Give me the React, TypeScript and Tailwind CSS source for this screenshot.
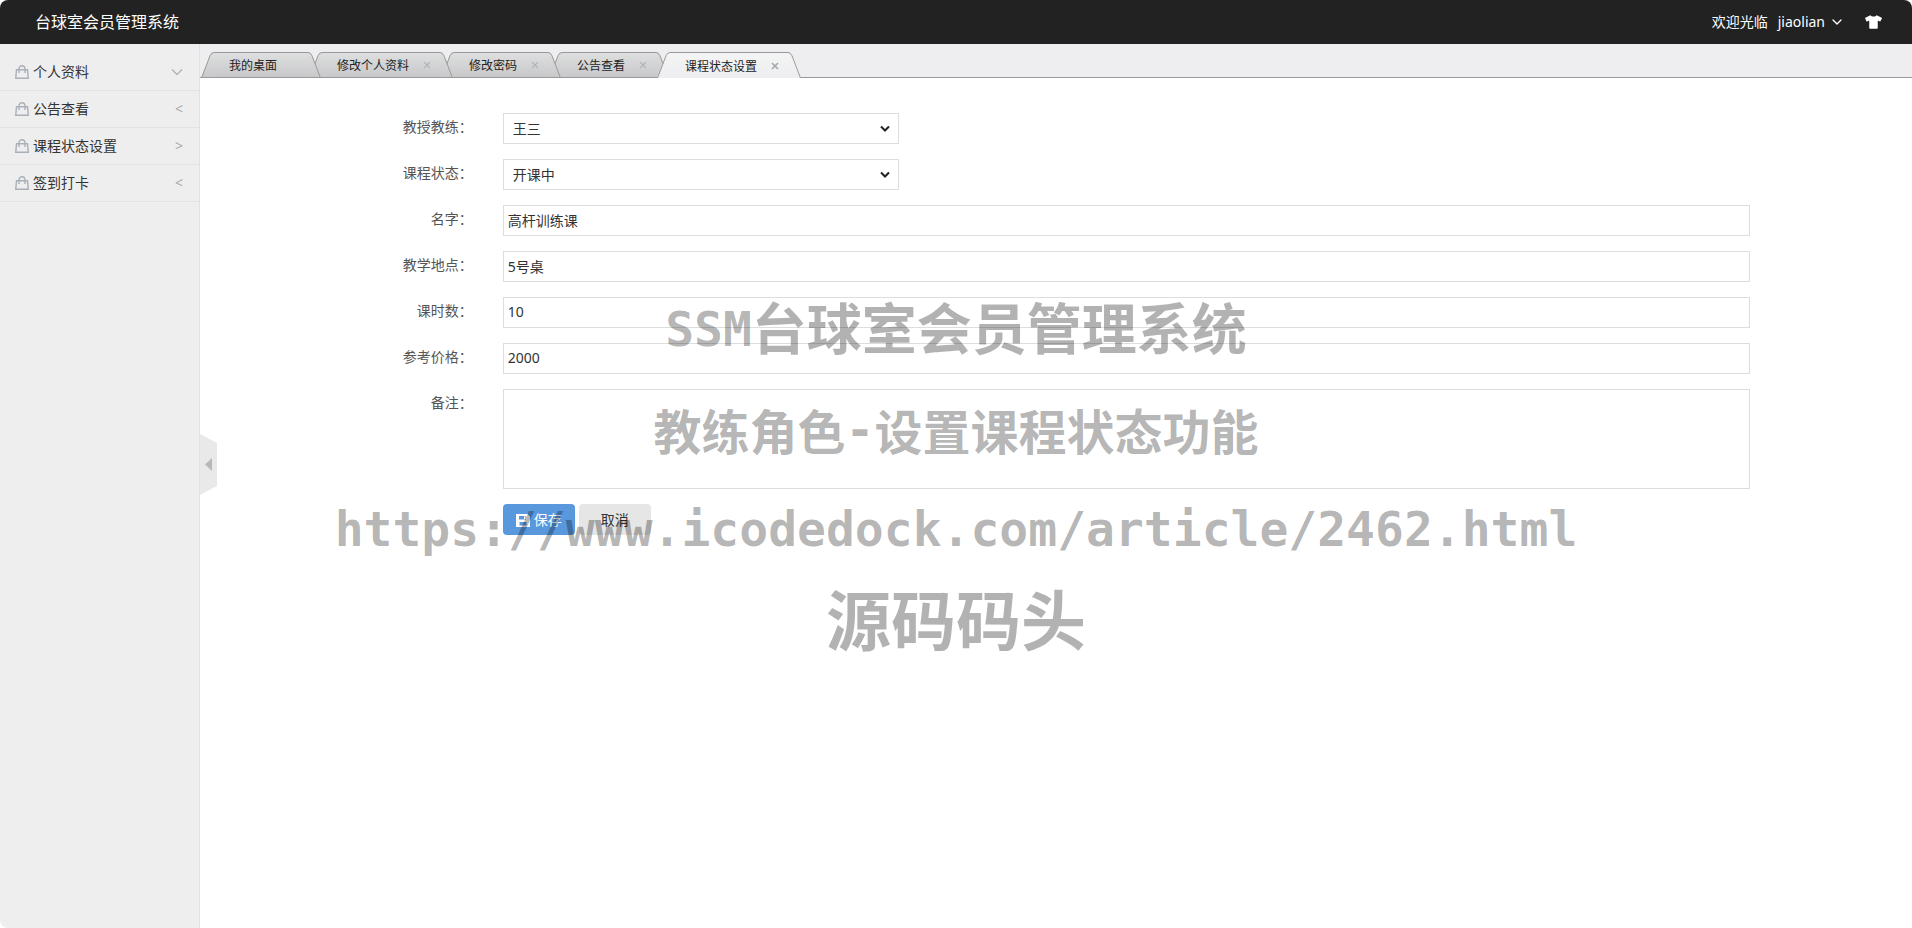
import React, { useState } from "react";
import { ChevronDown } from "lucide-react";
import { FaTshirt } from "react-icons/fa";

const font = "font-['Noto_Sans','Noto_Sans_CJK_SC',sans-serif]";

function BagIcon() {
  return (
    <svg viewBox="0 0 14 14" className="h-[14px] w-[14px] shrink-0" fill="none" stroke="#a9b0b8" aria-hidden="true">
      <path d="M1.500 4.750H12.500L13.250 13.250H0.750Z" strokeWidth="1.4" />
      <path d="M4 8V4.200C4 2 5.200 0.800 7 0.800S10 2 10 4.200V8" strokeWidth="1.4" />
    </svg>
  );
}

function SaveIcon() {
  return (
    <svg viewBox="0 0 14 14" className="h-[14px] w-[14px] shrink-0" aria-hidden="true">
      <path fill="#fff" fillRule="evenodd" d="M0 1h11.500L14 3.500V14H0zM3 3v3.500h7V3zM8 3.500h1.500v2.500H8zM3.500 9h7v3.500h-7z" />
    </svg>
  );
}

const menu = [
  { label: "个人资料", mark: "down" },
  { label: "公告查看", mark: "<" },
  { label: "课程状态设置", mark: ">" },
  { label: "签到打卡", mark: "<" },
];

function Sidebar() {
  return (
    <aside className="w-[200px] shrink-0 border-r border-[#e2e2e2] bg-[#eee] pt-[10px]">
      <nav aria-label="主菜单">
        {menu.map((m) => (
          <button
            key={m.label}
            type="button"
            className="flex h-[37px] w-full items-center border-b border-[#e2e2e2] pr-4 pl-[15px] text-left text-sm text-[#333]"
          >
            <BagIcon />
            <span className="ml-1 flex-1">{m.label}</span>
            {m.mark === "down" ? (
              <svg viewBox="0 0 12 8" className="h-2 w-3" fill="none" stroke="#b4b4b4" strokeWidth="1.4" aria-hidden="true">
                <path d="M1 1.500 6 6.500 11 1.500" />
              </svg>
            ) : (
              <span className="text-[#aaa]">{m.mark}</span>
            )}
          </button>
        ))}
      </nav>
    </aside>
  );
}

const tabs = [
  { label: "我的桌面", closable: false, layer: "z-[4]" },
  { label: "修改个人资料", closable: true, layer: "z-[3]" },
  { label: "修改密码", closable: true, layer: "z-[2]" },
  { label: "公告查看", closable: true, layer: "z-[1]" },
  { label: "课程状态设置", closable: true, layer: "z-[5]" },
];

function TabCap({ active, flip }: { active: boolean; flip?: boolean }) {
  const id = (active ? "on" : "off") + (flip ? "R" : "L");
  return (
    <svg viewBox="0 0 14 26" className={flip ? "h-[26px] w-[14px] shrink-0 -scale-x-100" : "h-[26px] w-[14px] shrink-0"} aria-hidden="true">
      <defs>
        <linearGradient id={id} x1="0" y1="0" x2="0" y2="1">
          <stop offset="0" stopColor={active ? "#f3f4f4" : "#dedfdf"} />
          <stop offset="1" stopColor={active ? "#eeeef0" : "#c8c8ca"} />
        </linearGradient>
      </defs>
      <path d="M0 26 9 3.500Q10.200 0 13 0H14V26z" fill={`url(#${id})`} />
      <path d="M0.500 26 9 3.800Q10.300 0.500 13 0.500H14" fill="none" stroke="#999" />
      {!active && <path d="M0 25.500H14" stroke="#999" />}
    </svg>
  );
}

function TabBar() {
  return (
    <div className="flex h-[34px] items-end border-b border-[#999] bg-[#eeeef0]">
      <div className="-mb-px ml-px flex" role="tablist">
        {tabs.map((t, i) => {
          const active = i === tabs.length - 1;
          return (
            <div key={t.label} className={`relative -mr-3 flex ${t.layer}`}>
              <TabCap active={active} />
              <div
                className={
                  active
                    ? "flex h-[26px] items-center border-t border-[#999] bg-linear-to-b from-[#f3f4f4] to-[#eeeef0] text-xs text-[#222]"
                    : "flex h-[26px] items-center border-y border-[#999] bg-linear-to-b from-[#dedfdf] to-[#c8c8ca] text-xs text-[#222]"
                }
              >
                <button type="button" role="tab" aria-selected={active} className="pt-0.5 pl-[14px]">
                  {t.label}
                </button>
                <span className="flex w-[30px] justify-end pr-1">
                  {t.closable && (
                    <button type="button" aria-label={`关闭${t.label}`} className="p-1">
                      <svg
                        viewBox="0 0 8 8"
                        className="h-2 w-2"
                        fill="none"
                        stroke={active ? "#a3a8ac" : "#b0b5ba"}
                        strokeWidth={active ? 1.6 : 1.2}
                      >
                        <path d="M1 1 7 7M7 1 1 7" />
                      </svg>
                    </button>
                  )}
                </span>
              </div>
              <TabCap active={active} flip />
            </div>
          );
        })}
      </div>
    </div>
  );
}

function Row({ id, label, narrow, children }: { id: string; label: string; narrow?: boolean; children: React.ReactNode }) {
  return (
    <div className="mt-[15px] -mr-[15px] -ml-4 flex">
      <label htmlFor={id} className="w-1/6 px-[15px] pt-[3px] text-right leading-[22px] text-[#555]">
        {label}：
      </label>
      <div className={narrow ? "w-1/4 px-[15px]" : "w-3/4 px-[15px]"}>{children}</div>
    </div>
  );
}

function Select({ id, options }: { id: string; options: string[] }) {
  return (
    <div className="relative">
      <select id={id} className="block h-[31px] w-full appearance-none border border-[#ddd] bg-white px-[9px] text-sm text-[#333] outline-none">
        {options.map((o) => (
          <option key={o}>{o}</option>
        ))}
      </select>
      <svg
        viewBox="0 0 10 8"
        className="pointer-events-none absolute top-3 right-[9px] h-2 w-[10px]"
        fill="none"
        stroke="#222"
        strokeWidth="2"
        aria-hidden="true"
      >
        <path d="M1 1.500 5 5.500 9 1.500" />
      </svg>
    </div>
  );
}

const fields = [
  { id: "name", label: "名字", value: "高杆训练课" },
  { id: "place", label: "教学地点", value: "5号桌" },
  { id: "hours", label: "课时数", value: "10" },
  { id: "price", label: "参考价格", value: "2000" },
];

function CourseForm() {
  const [values, setValues] = useState<Record<string, string>>(Object.fromEntries(fields.map((f) => [f.id, f.value])));
  return (
    <form className="px-5 pt-5 text-sm" onSubmit={(e) => e.preventDefault()}>
      <Row id="coach" label="教授教练" narrow>
        <Select id="coach" options={["王三"]} />
      </Row>
      <Row id="status" label="课程状态" narrow>
        <Select id="status" options={["开课中", "已结束"]} />
      </Row>
      {fields.map((f) => (
        <Row key={f.id} id={f.id} label={f.label}>
          <input
            id={f.id}
            type="text"
            value={values[f.id]}
            onChange={(e) => setValues({ ...values, [f.id]: e.target.value })}
            className="block h-[31px] w-full border border-[#ddd] bg-white px-1 pb-0.5 text-sm text-[#333] outline-none"
          />
        </Row>
      ))}
      <Row id="remark" label="备注">
        <textarea id="remark" className="block h-[100px] w-full resize-none border border-[#ddd] bg-white p-1 text-sm text-[#333] outline-none" />
      </Row>
      <div className="mt-[15px] -mr-[15px] -ml-4 flex">
        <div className="w-1/6" />
        <div className="flex gap-1 px-[15px]">
          <button type="submit" className="flex h-[31px] items-center gap-1 rounded bg-[#5a98de] px-[13px] text-white">
            <SaveIcon />
            保存
          </button>
          <button type="button" className="h-[31px] rounded bg-[#e6e6e6] px-[22px] text-[#333]">
            取消
          </button>
        </div>
      </div>
    </form>
  );
}

function Watermark() {
  return (
    <div className="pointer-events-none absolute inset-x-0 top-[285px] z-20 flex flex-col items-center font-['DejaVu_Sans_Mono','Noto_Sans_CJK_SC',monospace] font-bold whitespace-nowrap text-black/30">
      <p className="flex h-20 items-center leading-none">
        <span className="pt-2 text-[48px]">SSM</span>
        <span className="font-['Noto_Sans_CJK_SC',sans-serif] text-[55px]">台球室会员管理系统</span>
      </p>
      <p className="mt-6 flex h-20 items-center font-['Noto_Sans_CJK_SC',sans-serif] text-[48px] leading-none">
        教练角色
        <span className="font-['DejaVu_Sans_Mono',monospace]">-</span>
        设置课程状态功能
      </p>
      <p className="mt-5 flex h-20 items-center text-[48px] leading-none">https://www.icodedock.com/article/2462.html</p>
      <p className="mt-2 flex h-20 items-center font-['Noto_Sans_CJK_SC',sans-serif] text-[65px] leading-none">源码码头</p>
    </div>
  );
}

export default function App() {
  return (
    <div className={`relative flex min-h-screen flex-col overflow-hidden rounded-lg bg-white ${font}`}>
      <header className="flex h-11 items-center justify-between bg-[#222] pr-[30px] pl-[35px] text-white">
        <h1 className="text-base">台球室会员管理系统</h1>
        <div className="flex items-center text-sm">
          <span>欢迎光临</span>
          <button type="button" className="ml-2.5 flex items-center gap-1">
            jiaolian
            <ChevronDown size={16} strokeWidth={2} />
          </button>
          <button type="button" aria-label="换肤" className="ml-5">
            <FaTshirt className="h-[14px] w-[17px]" />
          </button>
        </div>
      </header>
      <div className="flex flex-1">
        <Sidebar />
        <main className="relative min-w-0 flex-1">
          <TabBar />
          <CourseForm />
          <button type="button" aria-label="收起菜单" className="absolute top-[390px] left-0">
            <svg viewBox="0 0 17 61" className="h-[61px] w-[17px]">
              <path d="M0 0 17 9V52L0 61z" fill="#e9e9e9" />
              <path d="M5 30.500 12 24V37z" fill="#b8b8b8" />
            </svg>
          </button>
        </main>
      </div>
      <Watermark />
    </div>
  );
}
